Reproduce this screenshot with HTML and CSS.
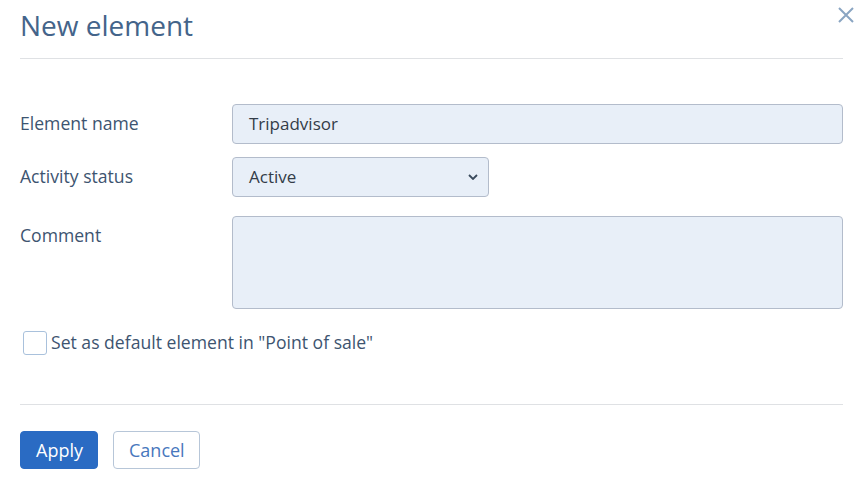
FILE: index.html
```html
<!DOCTYPE html>
<html>
<head>
<meta charset="utf-8">
<link rel="stylesheet" href="styles.css">
</head>
<body>
<div class="dialog">
  <div class="header">
    <h1 class="title">New element</h1>
    <button class="close" aria-label="Close">
      <svg width="16" height="16" viewBox="0 0 16 16"><path d="M1 1 L15 15 M15 1 L1 15" stroke="#8aa5c2" stroke-width="2" fill="none"/></svg>
    </button>
  </div>
  <div class="body">
    <div class="row">
      <label class="label">Element name</label>
      <div class="field"><div class="input">Tripadvisor</div></div>
    </div>
    <div class="row">
      <label class="label">Activity status</label>
      <div class="field">
        <div class="select">
          <span>Active</span>
          <svg class="chev" width="10" height="6" viewBox="0 0 10 6"><path d="M1 1 L5 5 L9 1" stroke="#3a4a5c" stroke-width="1.8" fill="none"/></svg>
        </div>
      </div>
    </div>
    <div class="row comment-row">
      <label class="label">Comment</label>
      <div class="field"><div class="textarea"></div></div>
    </div>
    <div class="check-row">
      <span class="checkbox"></span>
      <span class="check-label">Set as default element in "Point of sale"</span>
    </div>
  </div>
  <div class="footer">
    <button class="btn primary">Apply</button>
    <button class="btn secondary">Cancel</button>
  </div>
</div>
</body>
</html>
```
FILE: styles.css
```css
* { box-sizing: border-box; }
html, body { margin: 0; padding: 0; background: #fff; }
body { font-family: "Open Sans", "Noto Sans", sans-serif; color: #3d5470; }
.dialog { width: 863px; height: 486px; padding: 0 20px; }
.header {
  display: flex; justify-content: space-between; align-items: flex-start;
  height: 59px; border-bottom: 1px solid #dfe1e4;
}
.title {
  margin: 7px 0 0 0; font-weight: 400; font-size: 28px; line-height: 36px;
  color: #44648a; font-family: "Open Sans", sans-serif;
}
.close {
  border: none; background: none; padding: 0; margin: 6px -11px 0 0; width: 17px; height: 17px;
  display: flex; align-items: center; justify-content: center; cursor: pointer;
}
.body { padding-top: 45px; height: 346px; border-bottom: 1px solid #dfe1e4; }
.row { display: flex; align-items: flex-start; margin-bottom: 13px; }
.label { width: 212px; font-size: 17.6px; line-height: 22px; padding-top: 8px; color: #3d5470; }
.field { flex: 1; }
.input, .select, .textarea {
  background: #e8eff8; border: 1px solid #b3bccb; border-radius: 4px;
  font-size: 17px; color: #333c48; line-height: 22px;
}
.input { height: 40px; padding: 8px 16px; }
.select {
  width: 257px; height: 40px; padding: 8px 16px;
  display: flex; justify-content: space-between; align-items: center;
}
.chev { margin-right: -6px; }
.comment-row { margin-top: 19px; margin-bottom: 0; }
.textarea { height: 93px; }
.check-row { display: flex; align-items: center; margin-top: 22px; padding-left: 3px; }
.checkbox {
  width: 24px; height: 24px; border: 1px solid #a9c1dc; border-radius: 3px; background: #fff;
}
.check-label { margin-left: 4px; font-size: 17.6px; line-height: 22px; color: #3d5470; margin-top: -3px; }
.footer { display: flex; gap: 15px; padding-top: 26px; }
.btn {
  height: 38px; border-radius: 4px; font-family: "Open Sans", sans-serif; font-size: 18px;
  padding: 0 15px; cursor: pointer;
}
.primary { background: #2a6bc3; color: #fff; border: 1px solid #2a6bc3; width: 78px; }
.secondary { background: #fff; color: #4877bd; border: 1px solid #b7c6d8; width: 87px; }
```
